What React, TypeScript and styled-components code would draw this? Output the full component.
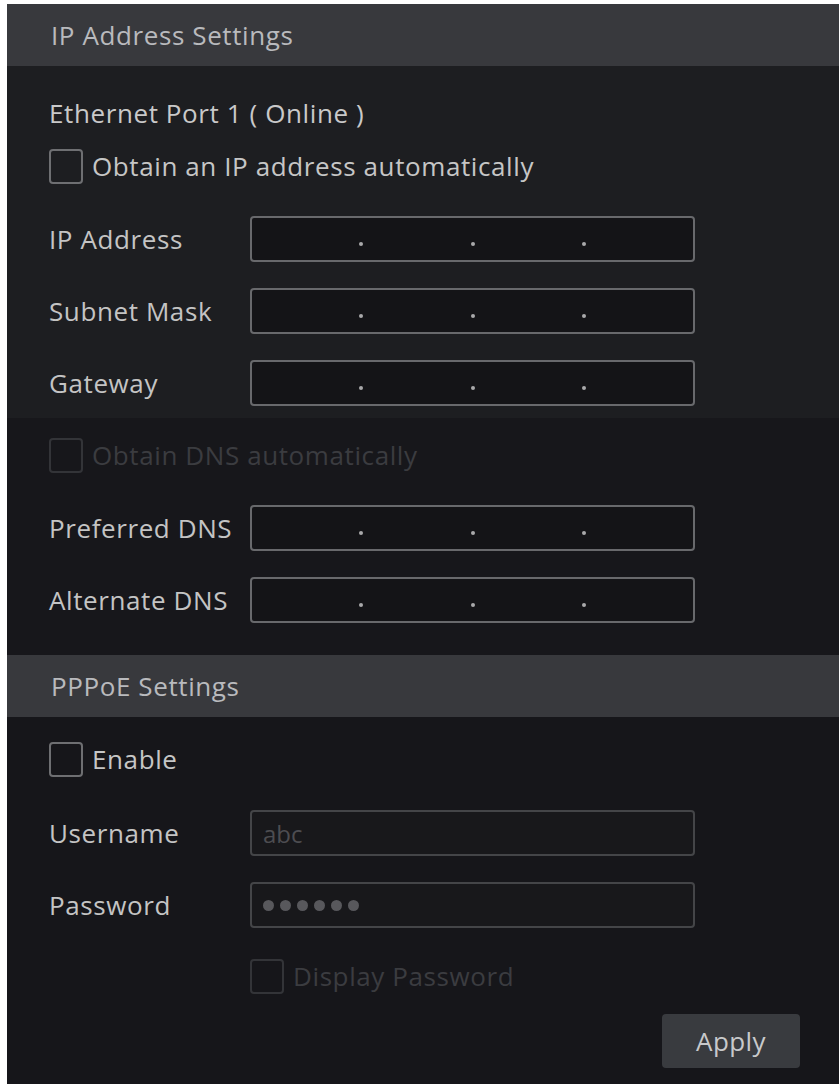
import React from "react";
import styled, { createGlobalStyle } from "styled-components";

const Global = createGlobalStyle`
  html, body { margin: 0; padding: 0; background: #ffffff; }
  body { font-family: "Open Sans", "Noto Sans", "Liberation Sans", sans-serif; }
  * { box-sizing: border-box; }
`;

const Page = styled.div`
  padding: 4px 0 0 7px;
  background: #ffffff;
  height: 1084px;
  overflow: hidden;
`;

const Panel = styled.div`
  width: 832px;
  height: 1080px;
  display: flex;
  flex-direction: column;
  background: #16161a;
`;

const Header = styled.div`
  height: 62px;
  flex: none;
  display: flex;
  align-items: center;
  padding-left: 44px;
  background: #38393d;
  color: #b9babd;
  font-size: 26px;
  letter-spacing: 0.6px;
`;

const Section = styled.div<{ $bg: string; $pt: number; $pb: number }>`
  display: flex;
  flex-direction: column;
  align-items: flex-start;
  padding: ${(p) => p.$pt}px 0 ${(p) => p.$pb}px 42px;
  background: ${(p) => p.$bg};
`;

const Title = styled.div`
  height: 34px;
  line-height: 34px;
  color: #c9c9c9;
  font-size: 26px;
  letter-spacing: 0.6px;
`;

const CheckRow = styled.label<{ $dim?: boolean; $mt: number; $ml?: number }>`
  display: flex;
  align-items: center;
  gap: 9px;
  height: 36px;
  margin-top: ${(p) => p.$mt}px;
  margin-left: ${(p) => p.$ml ?? 0}px;
  color: ${(p) => (p.$dim ? "#3b3c40" : "#c6c6c6")};
  font-size: 26px;
  letter-spacing: 0.6px;
`;

const Box = styled.span<{ $dim?: boolean }>`
  width: 34px;
  height: 35px;
  border: 2px solid ${(p) => (p.$dim ? "#333438" : "#6e6f72")};
  border-radius: 4px;
  flex: none;
`;

const FieldRow = styled.div<{ $mt: number }>`
  display: flex;
  align-items: center;
  height: 46px;
  margin-top: ${(p) => p.$mt}px;
`;

const Label = styled.div`
  width: 201px;
  color: #c4c4c4;
  font-size: 26px;
  letter-spacing: 0.6px;
  white-space: nowrap;
`;

const IpInput = styled.div`
  width: 445px;
  height: 46px;
  border: 2px solid #68696c;
  border-radius: 4px;
  background: #141417;
  display: flex;
  justify-content: space-evenly;
  align-items: center;
`;

const Dot = styled.span`
  width: 4px;
  height: 4px;
  border-radius: 50%;
  background: #a9a9ab;
  margin-top: 9px;
`;

const TextInput = styled.div`
  width: 445px;
  height: 46px;
  border: 2px solid #444548;
  border-radius: 4px;
  background: #18181b;
  display: flex;
  align-items: center;
  padding-left: 11px;
  color: #4d4d51;
  font-size: 24px;
  gap: 6px;
`;

const PwDot = styled.span`
  width: 11px;
  height: 11px;
  border-radius: 50%;
  background: #58585c;
`;

const ButtonRow = styled.div`
  align-self: stretch;
  display: flex;
  justify-content: flex-end;
  padding-right: 39px;
  margin-top: 20px;
`;

const ApplyButton = styled.button`
  width: 138px;
  height: 54px;
  border: none;
  border-radius: 4px;
  background: #393b3f;
  color: #c8c9cb;
  font-family: inherit;
  font-size: 26px;
  letter-spacing: 0.4px;
  padding: 0;
`;

const IpField = ({ label, mt }: { label: string; mt: number }) => (
  <FieldRow $mt={mt}>
    <Label>{label}</Label>
    <IpInput>
      <Dot />
      <Dot />
      <Dot />
    </IpInput>
  </FieldRow>
);

export default function App() {
  return (
    <>
      <Global />
      <Page>
        <Panel>
          <Header>IP Address Settings</Header>
          <Section $bg="#1d1e21" $pt={30} $pb={12}>
            <Title>Ethernet Port 1 ( Online )</Title>
            <CheckRow $mt={18}>
              <Box />
              Obtain an IP address automatically
            </CheckRow>
            <IpField label="IP Address" mt={32} />
            <IpField label="Subnet Mask" mt={26} />
            <IpField label="Gateway" mt={26} />
          </Section>
          <Section $bg="#17171b" $pt={19} $pb={32}>
            <CheckRow $dim $mt={0}>
              <Box $dim />
              Obtain DNS automatically
            </CheckRow>
            <IpField label="Preferred DNS" mt={32} />
            <IpField label="Alternate DNS" mt={26} />
          </Section>
          <Header>PPPoE Settings</Header>
          <Section $bg="#16161a" $pt={24} $pb={16}>
            <CheckRow $mt={0}>
              <Box />
              Enable
            </CheckRow>
            <FieldRow $mt={33}>
              <Label>Username</Label>
              <TextInput>abc</TextInput>
            </FieldRow>
            <FieldRow $mt={26}>
              <Label>Password</Label>
              <TextInput>
                {Array.from({ length: 6 }).map((_, i) => (
                  <PwDot key={i} />
                ))}
              </TextInput>
            </FieldRow>
            <CheckRow $dim $mt={30} $ml={201}>
              <Box $dim />
              Display Password
            </CheckRow>
            <ButtonRow>
              <ApplyButton>Apply</ApplyButton>
            </ButtonRow>
          </Section>
        </Panel>
      </Page>
    </>
  );
}
